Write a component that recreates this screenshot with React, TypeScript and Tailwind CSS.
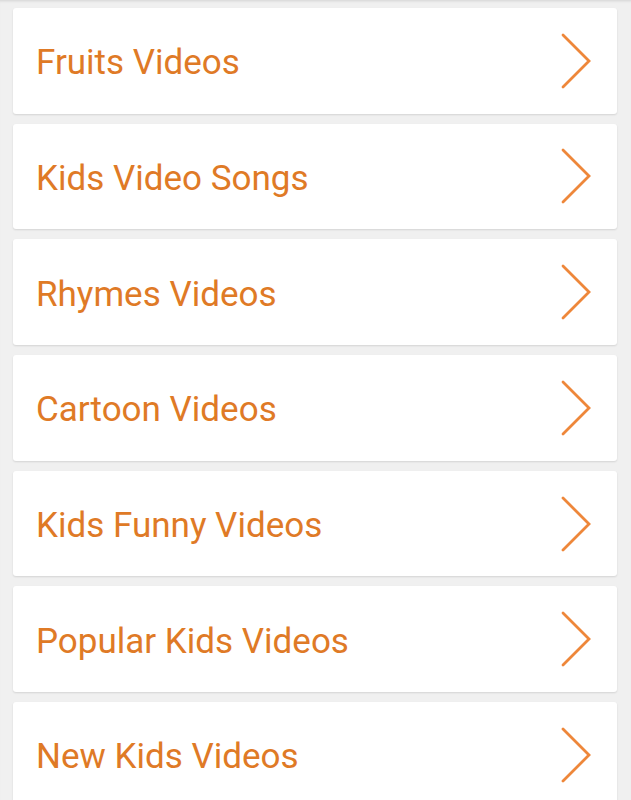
import React from 'react';

const categories = [
    'Fruits Videos',
    'Kids Video Songs',
    'Rhymes Videos',
    'Cartoon Videos',
    'Kids Funny Videos',
    'Popular Kids Videos',
    'New Kids Videos',
];

const Chevron: React.FC = () => (
    <svg width="34" height="56" viewBox="0 0 34 56" fill="none" className="shrink-0">
        <path d="M4 2 L30 28 L4 54" stroke="#ee873a" strokeWidth="2.8" strokeLinecap="round" strokeLinejoin="miter" />
    </svg>
);

const App: React.FC = () => {
    return (
        <div className="min-h-screen h-[800px] overflow-hidden bg-[#f0f0f0] shadow-[inset_0_3px_3px_-2px_rgba(0,0,0,0.12)]">
            <div className="flex flex-col gap-[10.2px] pt-[8px] pl-[13px] pr-[14px]">
                {categories.map(name => (
                    <button
                        key={name}
                        className="h-[105.5px] shrink-0 flex items-center justify-between bg-white rounded-[3px] shadow-[0_1px_2px_rgba(0,0,0,0.12)] pl-[23px] pr-[24px] text-left"
                    >
                        <span className="text-[#df7a26] text-[35px] leading-none font-['Roboto',sans-serif] pt-[4px]">{name}</span>
                        <Chevron />
                    </button>
                ))}
            </div>
        </div>
    );
};

export default App;
